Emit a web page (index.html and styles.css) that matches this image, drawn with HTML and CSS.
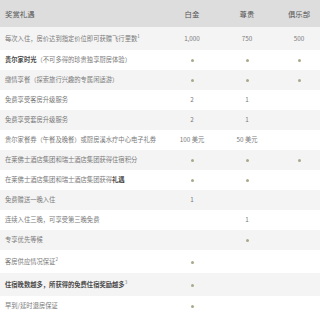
FILE: index.html
```html
<!DOCTYPE html>
<html lang="zh-CN">

<head>
    <meta charset="utf-8">
    <meta name="viewport" content="width=device-width, initial-scale=1.0">
    <title>奖赏礼遇</title>
    <link rel="stylesheet" href="styles.css">
</head>

<body>
    <div class="tabel">
        <div class="raekke hoved">
            <div class="tekst">奖赏礼遇</div>
            <div>白金</div>
            <div>尊贵</div>
            <div>俱乐部</div>
        </div>
        <div class="raekke graa hoej">
            <div class="tekst">每次入住，房价达到指定价位即可获赠飞行里数<sup>1</sup></div>
            <div>1,000</div>
            <div>750</div>
            <div>500</div>
        </div>
        <div class="raekke">
            <div class="tekst"><b>贵尔家时光</b>（不可多得的珍贵独享厨房体验）</div>
            <div><span class="prik"></span></div>
            <div><span class="prik"></span></div>
            <div><span class="prik"></span></div>
        </div>
        <div class="raekke graa">
            <div class="tekst">缴情享餐（探索旅行兴趣的专属闲适游）</div>
            <div><span class="prik"></span></div>
            <div><span class="prik"></span></div>
            <div><span class="prik"></span></div>
        </div>
        <div class="raekke">
            <div class="tekst">免费享受客房升级服务</div>
            <div>2</div>
            <div>1</div>
            <div></div>
        </div>
        <div class="raekke graa">
            <div class="tekst">免费享受套房升级服务</div>
            <div>2</div>
            <div>1</div>
            <div></div>
        </div>
        <div class="raekke">
            <div class="tekst">贵尔家餐券（午餐及晚餐）或厨房溪水疗中心电子礼券</div>
            <div>100 美元</div>
            <div>50 美元</div>
            <div></div>
        </div>
        <div class="raekke graa">
            <div class="tekst">在莱佛士酒店集团和瑞士酒店集团获得住宿积分</div>
            <div><span class="prik"></span></div>
            <div><span class="prik"></span></div>
            <div><span class="prik"></span></div>
        </div>
        <div class="raekke">
            <div class="tekst">在莱佛士酒店集团和瑞士酒店集团获得<b>礼遇</b></div>
            <div><span class="prik"></span></div>
            <div><span class="prik"></span></div>
            <div></div>
        </div>
        <div class="raekke graa">
            <div class="tekst">免费赠送一晚入住</div>
            <div>1</div>
            <div></div>
            <div></div>
        </div>
        <div class="raekke">
            <div class="tekst">连续入住三晚，可享受第三晚免费</div>
            <div></div>
            <div>1</div>
            <div></div>
        </div>
        <div class="raekke graa">
            <div class="tekst">专享优先等候</div>
            <div></div>
            <div><span class="prik"></span></div>
            <div></div>
        </div>
        <div class="raekke hoej">
            <div class="tekst">客房供应情况保证<sup>2</sup></div>
            <div><span class="prik"></span></div>
            <div></div>
            <div></div>
        </div>
        <div class="raekke graa hoej">
            <div class="tekst"><b>住宿晚数越多，所获得的免费住宿奖励越多</b><sup>3</sup></div>
            <div><span class="prik"></span></div>
            <div></div>
            <div></div>
        </div>
        <div class="raekke">
            <div class="tekst">早到/延时退房保证</div>
            <div><span class="prik"></span></div>
            <div></div>
            <div></div>
        </div>
    </div>
</body></html>
```

FILE: styles.css
```css
* {
    margin: 0px;
    box-sizing: border-box;
}

html,
body {
    overflow: hidden;
}

body {
    background-color: white;
    font-family: "Noto Sans CJK SC", "Noto Sans", sans-serif;
    font-size: 6.3px;
    color: #7a7a7a;
}

.tabel {
    width: 324px;
}

.raekke {
    display: grid;
    grid-template-columns: 164px 56px 54px 50px;
    align-items: center;
    text-align: center;
    height: 20px;
    line-height: 8px;
}

.raekke .tekst {
    text-align: left;
    padding-left: 5px;
    white-space: nowrap;
}

.hoved {
    height: 27px;
    background-color: #dddddd;
    font-size: 7.4px;
    color: #555555;
}

.graa {
    background-color: #f4f4f4;
}

.hoej {
    height: 23px;
    padding-top: 1px;
}

b {
    font-weight: bold;
    color: #4a4a4a;
}

sup {
    font-size: 4.5px;
    line-height: 0;
    vertical-align: 3px;
    color: #777777;
}

.prik {
    display: inline-block;
    width: 3px;
    height: 3px;
    border-radius: 50%;
    background-color: #aaa88c;
    vertical-align: middle;
}
```
